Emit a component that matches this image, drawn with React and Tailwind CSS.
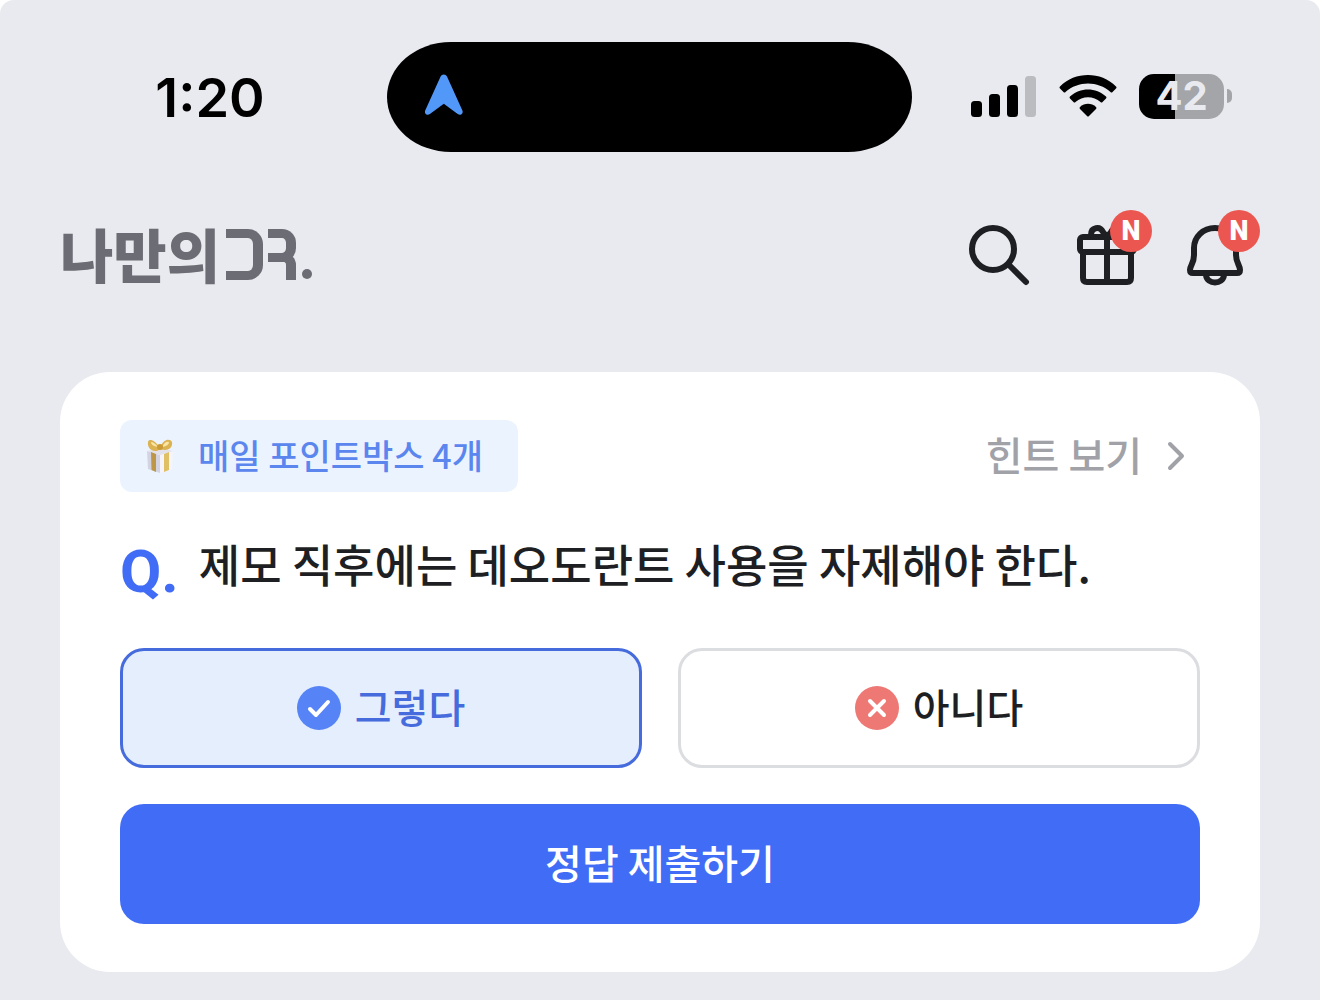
import React from "react";

function StatusBar() {
  return (
    <div className="grid grid-cols-[387fr_525fr_408fr] items-center pt-[42px]">
      <div className="pt-[2px] pl-[33px] text-center text-[54px] leading-[64px] font-semibold text-black">
        1:20
      </div>
      <div className="flex h-[110px] items-center rounded-[64px/55px] bg-black pb-[4px] pl-[37px]">
        <svg width="40" height="44" viewBox="0 0 40 44" fill="#5198f8" aria-hidden="true">
          <path d="M16.6 3.6C17.8 .9 21.8 .9 23 3.6L38.4 37.4C39.6 40.600 36.600 43 33.700 41L19.800 30.800L5.900 41C3 43 0 40.600 1.200 37.400Z" />
        </svg>
      </div>
      <div className="flex items-center pb-[2px] pl-[59px]">
        <svg width="65" height="42" viewBox="0 0 65 42" aria-hidden="true">
          <rect x="0" y="26" width="11" height="16" rx="3.500" />
          <rect x="18" y="19" width="11" height="23" rx="3.500" />
          <rect x="36" y="10" width="11" height="32" rx="3.500" />
          <rect x="54" y="1" width="11" height="41" rx="3.500" fill="#bbbcc0" />
        </svg>
        <svg className="ml-[23px]" width="58" height="42" viewBox="0 0 58 42" aria-hidden="true">
          <path d="M1 11.500C16-3.800 42-3.800 57 11.500Q58 12.500 57 13.500L53.500 17Q52.500 18 51.500 17C39 5.500 19 5.500 6.500 17Q5.500 18 4.500 17L1 13.500Q0 12.500 1 11.500Z" />
          <path d="M11 21.500C21 12 37 12 47 21.500Q48 22.500 47 23.500L43.500 27Q42.500 28 41.500 27C34.500 20.500 23.500 20.500 16.500 27Q15.500 28 14.500 27L11 23.500Q10 22.500 11 21.500Z" />
          <path d="M21 32C25.500 27.600 32.500 27.600 37 32Q38 33 37 34L30 41Q29 42 28 41L21 34Q20 33 21 32Z" />
        </svg>
        <div className="ml-[22px] flex h-[45px] w-[85px] items-center justify-center rounded-[15px] bg-[linear-gradient(to_right,#000_36px,#a4a5a8_36px)] text-[40px] leading-none font-bold text-[#e9eaef]">
          42
        </div>
        <div className="ml-[3px] h-[14px] w-[5px] rounded-r-full bg-[#a4a5a8]" />
      </div>
    </div>
  );
}

function Logo() {
  return (
    <a href="#" aria-label="나만의 DR." className="flex items-center text-[#6c6d74]">
      <span className="font-['Noto_Sans_CJK_KR',sans-serif] text-[58px] leading-[60px] font-black">
        나만의
      </span>
      <span className="mt-[2px] ml-[6px] h-[51px] w-[37px] rounded-r-[15px] border-y-[9px] border-r-[10px] border-current" />
      <span className="mt-[2px] ml-[5px] flex h-[51px] flex-col">
        <span className="h-[33px] w-[28px] rounded-r-[14px] border-y-[9px] border-r-[10px] border-current" />
        <span className="-mt-[9px] h-[27px] w-[28px] rounded-tr-[12px] border-t-[9px] border-r-[10px] border-current" />
      </span>
      <span className="mt-[41px] ml-[6px] size-[10px] rounded-full bg-current" />
    </a>
  );
}

function NewBadge() {
  return (
    <span className="absolute -top-[10px] left-[36px] flex size-[42px] items-center justify-center rounded-full bg-[#eb5750] font-['Roboto',sans-serif] text-[27px] leading-none font-black text-white">
      N
    </span>
  );
}

const iconProps = {
  width: 66,
  height: 66,
  viewBox: "0 0 66 66",
  fill: "none",
  stroke: "#1e1f23",
  strokeWidth: 6,
  strokeLinecap: "round",
  strokeLinejoin: "round",
  "aria-hidden": true,
};

function Header() {
  return (
    <header className="mt-[68px] flex items-center justify-between pr-[72px] pl-[60px]">
      <Logo />
      <nav className="flex gap-[42px]">
        <button type="button" aria-label="검색">
          <svg {...iconProps}>
            <circle cx="27" cy="29" r="21" />
            <path d="M42.500 44.500L60 62" />
          </svg>
        </button>
        <button type="button" aria-label="선물" className="relative">
          <svg {...iconProps}>
            <rect x="6" y="17" width="54" height="15" rx="3" />
            <path d="M9 32V58Q9 62 13 62H53Q57 62 57 58V32M33 17V62" />
            <path d="M17 15C17 7 26 6 29 12L33 17L37 12C40 6 49 7 49 15" />
          </svg>
          <NewBadge />
        </button>
        <button type="button" aria-label="알림" className="relative">
          <svg {...iconProps}>
            <path d="M33 8C21 8 12 17 12 28V35C12 44 8 45 8 50Q8 53 11 53H55Q58 53 58 50C58 45 54 43 54 35V28C54 17 45 8 33 8Z" />
            <path d="M24 55C25 65 41 65 42 55" />
          </svg>
          <NewBadge />
        </button>
      </nav>
    </header>
  );
}

function GiftBox() {
  return (
    <svg width="28" height="36" viewBox="0 0 28 36" aria-hidden="true">
      <path d="M1 13L14 17V35L2 31Z" fill="#d3d3e2" />
      <path d="M14 17L27 13L26 31L14 35Z" fill="#f6f4f8" />
      <path d="M1 13L14 10L27 13L14 17Z" fill="#e3e1ea" />
      <path d="M5 14L10 16V34L5.500 32Z" fill="#bd9745" />
      <path d="M18 16L23 14V32L18 34Z" fill="#e0c065" />
      <path d="M14 10C9 2 3 0 2 4C1 9 5 13 9 13C13 13 14 11 14 10ZM14 10C17 1 24 0 26 4C27 9 23 12 19 12C16 12 14 11 14 10Z" fill="#dcb352" />
      <path d="M12 9Q8 4 5 4Q5 8 12 9M16 9Q19 3 23 4Q23 8 16 9" fill="#f9e6a4" />
      <circle cx="14" cy="9" r="3" fill="#c99a36" />
    </svg>
  );
}

function Choice({ label, checked, className, children }) {
  return (
    <button
      type="button"
      aria-pressed={checked}
      className={`flex h-[120px] items-center justify-center gap-[14px] rounded-[24px] border-[3px] text-[40px] leading-[60px] font-medium ${className}`}
    >
      <svg width="44" height="44" viewBox="0 0 44 44" fill="none" stroke="#fff" strokeWidth="4" strokeLinecap="round" strokeLinejoin="round" aria-hidden="true">
        {children}
      </svg>
      <span className="pb-[4px]">{label}</span>
    </button>
  );
}

function QuizCard() {
  return (
    <main className="mx-[60px] mt-[86px] rounded-[50px] bg-white px-[60px] py-[48px] font-['Noto_Sans_CJK_KR',sans-serif]">
      <div className="flex items-center justify-between">
        <div className="flex h-[72px] items-center gap-[24px] rounded-[12px] bg-[#ebf4fe] pr-[35px] pl-[26px] text-[34px] leading-[50px] font-medium text-[#5b86ee]">
          <GiftBox />
          <span className="pb-[2px]">매일 포인트박스 4개</span>
        </div>
        <a href="#" className="flex items-center gap-[24px] pr-[14px] text-[40px] leading-[60px] font-medium text-[#a1a2a8]">
          <span className="pb-[4px]">힌트 보기</span>
          <svg width="20" height="30" viewBox="0 0 20 30" fill="none" stroke="currentColor" strokeWidth="4" strokeLinecap="round" strokeLinejoin="round" aria-hidden="true">
            <path d="M4 3L16 15L4 27" />
          </svg>
        </a>
      </div>
      <h1 className="mt-[36px] flex h-[84px] gap-[20px] text-[45px] leading-[72px] font-medium text-[#1e1f23]">
        <span className="pt-[8px] font-['Roboto',sans-serif] text-[60px] font-bold text-[#416df6]">Q.</span>
        <span>제모 직후에는 데오도란트 사용을 자제해야 한다.</span>
      </h1>
      <div className="mt-[36px] grid grid-cols-2 gap-[36px]">
        <Choice label="그렇다" checked className="border-[#466bdc] bg-[#e4eefd] text-[#466bdc]">
          <circle cx="22" cy="22" r="22" fill="#5683f5" stroke="none" />
          <path d="M13 23L19 29L31 16" />
        </Choice>
        <Choice label="아니다" checked={false} className="border-[#dcdde0] bg-white text-[#1e1f23]">
          <circle cx="22" cy="22" r="22" fill="#ed7874" stroke="none" />
          <path d="M15 15L29 29M29 15L15 29" />
        </Choice>
      </div>
      <button type="button" className="mt-[36px] h-[120px] w-full rounded-[24px] bg-[#416df6] pb-[4px] text-[40px] leading-[60px] font-medium text-white">
        정답 제출하기
      </button>
    </main>
  );
}

export default function App() {
  return (
    <div className="bg-white">
      <div className="min-h-screen rounded-t-[14px] bg-[#e9eaef] pb-[28px] font-['Inter',sans-serif]">
        <StatusBar />
        <Header />
        <QuizCard />
      </div>
    </div>
  );
}
